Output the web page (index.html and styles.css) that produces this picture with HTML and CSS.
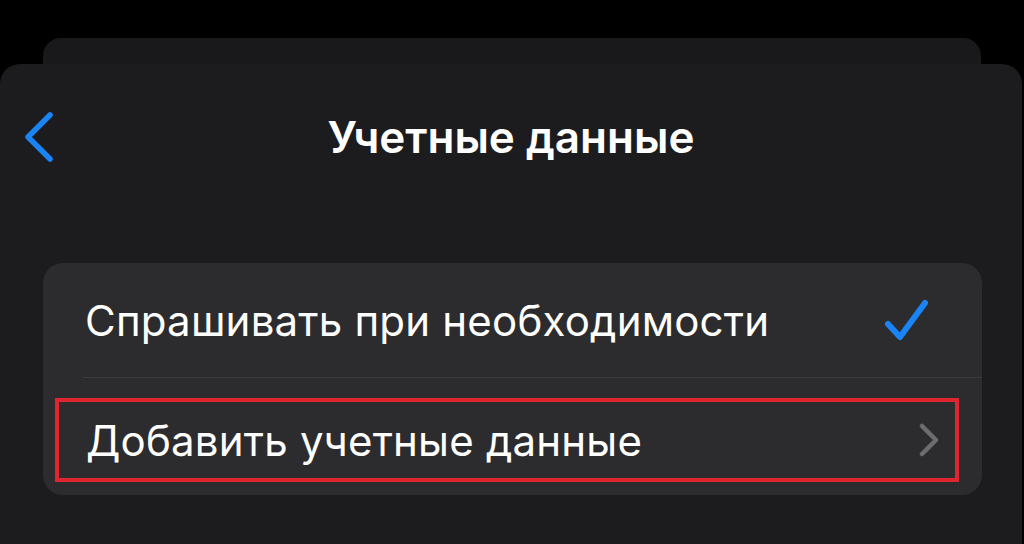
FILE: index.html
```html
<!DOCTYPE html>
<html>
  <head>
    <title>Учетные данные</title>
    <link rel="stylesheet" href="styles.css">
  </head>
  <body>
    <div class="back-sheet"></div>
    <div class="sheet">
      <div class="nav">
        <svg class="back-btn" width="32" height="52" viewBox="0 0 32 52">
          <path d="M27 4 L5 26 L27 48" fill="none" stroke="#1a84f5" stroke-width="5.5" stroke-linecap="round" stroke-linejoin="round"/>
        </svg>
        <h1 class="title">Учетные данные</h1>
        <div></div>
      </div>
      <div class="card">
        <div class="row">
          <span class="label">Спрашивать при необходимости</span>
          <svg class="check" width="44" height="42" viewBox="0 0 44 42">
            <path d="M4 25 L16 38 L41 4" fill="none" stroke="#1a84f5" stroke-width="6" stroke-linecap="round" stroke-linejoin="round"/>
          </svg>
        </div>
        <div class="row row-add">
          <div class="highlight">
            <span class="label">Добавить учетные данные</span>
            <svg class="chevron" width="22" height="34" viewBox="0 0 22 34">
              <path d="M4 3 L18 17 L4 31" fill="none" stroke="#6c6c70" stroke-width="4.5" stroke-linecap="round" stroke-linejoin="round"/>
            </svg>
          </div>
        </div>
      </div>
    </div>
  </body>
</html>
```
FILE: styles.css
```css
html,
body {
  height: 100%;
}

body {
  margin: 0;
  background-color: #000;
  font-family: Inter, "Noto Sans", sans-serif;
  color: #fff;
  display: flex;
  flex-direction: column;
  overflow: hidden;
}

.back-sheet {
  flex: none;
  height: 26px;
  margin: 38px 43px 0 43px;
  background-color: #19191b;
  border-radius: 18px 18px 0 0;
}

.sheet {
  flex: 1;
  margin-right: 2px;
  background-color: #1c1c1e;
  border-radius: 20px 20px 0 0;
}

.nav {
  display: grid;
  grid-template-columns: 1fr auto 1fr;
  align-items: center;
  height: 146px;
}

.back-btn {
  margin-left: 23px;
}

.title {
  margin: 0;
  font-size: 44px;
  font-weight: 600;
  letter-spacing: 0;
}

.card {
  margin: 53px 40px 0 43px;
  background-color: #2c2c2e;
  border-radius: 20px;
}

.row {
  display: flex;
  align-items: center;
  justify-content: space-between;
  height: 115px;
  margin-left: 40px;
  padding-right: 54px;
  border-bottom: 1px solid #3c3c3f;
  box-sizing: border-box;
}

.label {
  font-size: 42px;
  font-weight: 400;
  letter-spacing: 0.2px;
  margin-left: 2px;
}

.row-add {
  display: block;
  height: 117px;
  margin-left: 0;
  padding: 20px 23px 13px 12px;
  border-bottom: none;
}

.highlight {
  display: flex;
  align-items: center;
  justify-content: space-between;
  height: 100%;
  box-sizing: border-box;
  border: 4px solid #de2530;
  padding: 0 15px 0 25px;
}

.highlight .label {
  margin-left: 2px;
}
```
